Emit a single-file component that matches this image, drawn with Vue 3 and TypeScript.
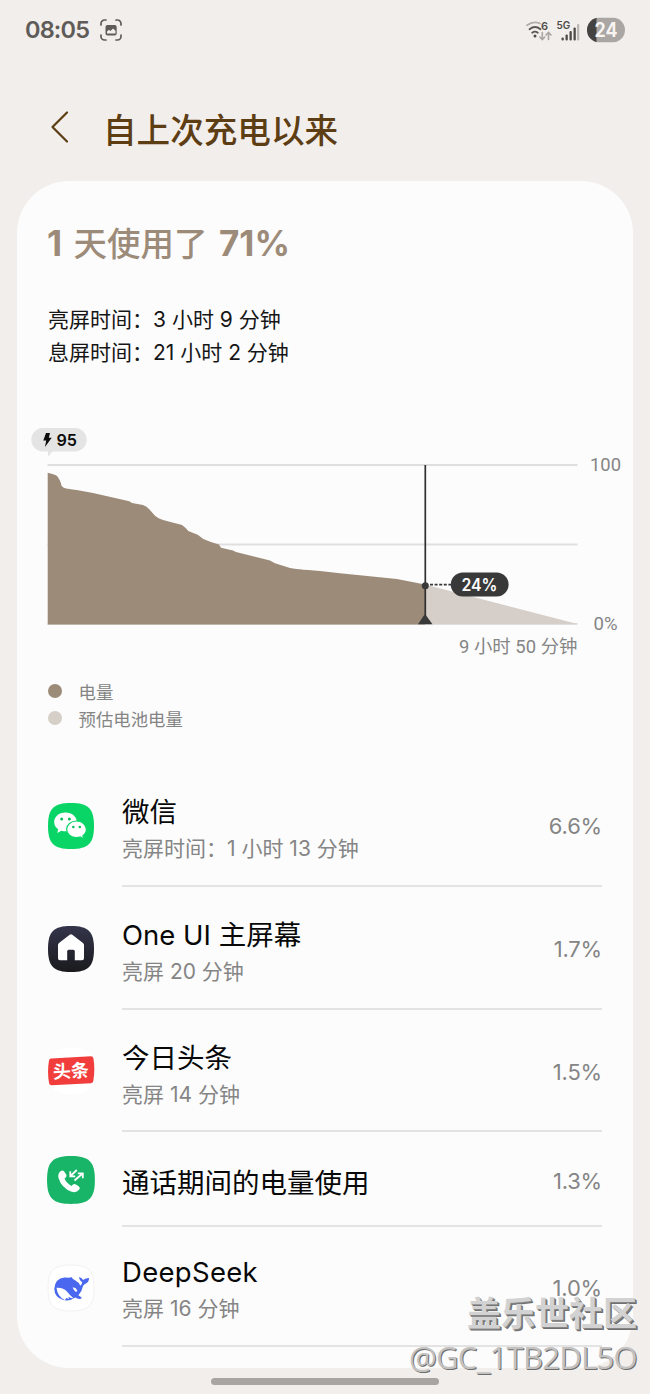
<script setup lang="ts">
type IconKind = 'wechat' | 'home' | 'toutiao' | 'call' | 'deepseek'

interface UsageRow {
  icon: IconKind
  name: string
  detail?: string
  percent: string
}

const rows: UsageRow[] = [
  { icon: 'wechat', name: '微信', detail: '亮屏时间：1 小时 13 分钟', percent: '6.6%' },
  { icon: 'home', name: 'One UI 主屏幕', detail: '亮屏 20 分钟', percent: '1.7%' },
  { icon: 'toutiao', name: '今日头条', detail: '亮屏 14 分钟', percent: '1.5%' },
  { icon: 'call', name: '通话期间的电量使用', percent: '1.3%' },
  { icon: 'deepseek', name: 'DeepSeek', detail: '亮屏 16 分钟', percent: '1.0%' },
]

const squircle = 'M24 1C41.5 1 47 6.5 47 24S41.5 47 24 47 1 41.5 1 24 6.500 1 24 1Z'
</script>

<template>
  <div class="screen">
    <header class="status">
      <span class="clock">08:05</span>
      <svg class="shot" width="22" height="22" viewBox="0 0 22 22">
        <path d="M1 6V4.500A3.500 3.500 0 0 1 4.500 1H6M16 1h1.500A3.500 3.500 0 0 1 21 4.500V6M21 16v1.500a3.500 3.500 0 0 1-3.500 3.500H16M6 21H4.500A3.500 3.500 0 0 1 1 17.500V16" fill="none" stroke="#5e5b59" stroke-width="1.7" stroke-linecap="round" />
        <rect x="5.500" y="6" width="11.200" height="10.500" rx="2" fill="#5e5b59" />
        <path d="M7 14.500v-2l2-1.800 1.500 1.200 2.500-2.400 2.500 2.300v2.700Z" fill="#f2eeeb" />
      </svg>
      <span class="spacer"></span>
      <svg width="104" height="28" viewBox="0 0 104 28">
        <g fill="none" stroke-linecap="round" stroke-width="1.800">
          <path d="M2 9.300Q8.500 4.500 15 7.500" stroke="#b0adab" />
          <path d="M4.500 13.300Q10 8.800 15.500 13.300" stroke="#5a5755" />
          <path d="M7.200 16.800Q10 14.500 12.800 16.800" stroke="#5a5755" />
          <path d="M17.300 16.500v7M14.800 21l2.500 2.500 2.500-2.500M23.500 23.500v-7M21 19l2.500-2.500L26 19" stroke="#aaa6a3" stroke-width="1.600" />
        </g>
        <circle cx="10" cy="20" r="1.500" fill="#4d4a48" />
        <text x="16" y="14" class="tiny">6</text>
        <text x="31.500" y="12.500" class="tiny five">5G</text>
        <g fill="#4d4a48">
          <rect x="36.500" y="21.500" width="2.300" height="3" rx="1" />
          <rect x="40.500" y="18.500" width="2.300" height="6" rx="1" />
          <rect x="44.500" y="15" width="2.300" height="9.500" rx="1" />
          <rect x="48.500" y="11.500" width="2.300" height="13" rx="1" />
          <rect x="52" y="8" width="2.300" height="16.500" rx="1" fill="#bbb7b4" />
        </g>
        <clipPath id="battery"><rect x="62" y="1.500" width="38" height="25" rx="12.500" /></clipPath>
        <g clip-path="url(#battery)">
          <rect x="62" y="1.500" width="39" height="25" fill="#aaa6a3" />
          <rect x="62" y="1.500" width="9.500" height="25" fill="#454341" />
        </g>
        <text x="81" y="20.700" class="level" text-anchor="middle" textLength="23" lengthAdjust="spacingAndGlyphs">24</text>
      </svg>
    </header>

    <div class="titlebar">
      <svg width="20" height="34" viewBox="0 0 20 34">
        <path d="M17 2.500 2.500 17 17 31.500" fill="none" stroke="#5d3d14" stroke-width="2.200" stroke-linecap="round" stroke-linejoin="round" />
      </svg>
      <h1>自上次充电以来</h1>
    </div>

    <main class="card">
      <h2><b>1</b> 天使用了 <b>71%</b></h2>
      <div class="times">
        <p>亮屏时间：3 小时 9 分钟</p>
        <p>息屏时间：21 小时 2 分钟</p>
      </div>

      <svg class="chart" width="616" height="244" viewBox="17 420 616 244">
        <g stroke="#dfdfdf" stroke-width="1.800">
          <path d="M47.500 465H577.500M47.500 544.500H577.500M47.500 624H577.500" />
        </g>
        <path fill="#d6cec8" d="M425 584.500 577.500 624H425Z" />
        <path fill="#9d8b79" d="M47.700 472.700Q53 474 56 475.300Q59 477.500 61 483.500Q61 487 66 488.500L78 490.300 93 493 129.300 501.300 132 503 143 505Q147 506.500 149 509L155 515.700Q158 518.500 163 520L182 525Q185 527 188.300 531L197.700 534.700 203.300 539 Q210 542 219 544.500L221 547.700 233 550.500 236 552 270 560.500 275 563.300 290 568Q294 569 320 571L340 573.300 397 579 425 584.500V624.500H47.700Z" />
        <path d="M425.300 465V622" stroke="#2f2f30" stroke-width="1.700" />
        <path d="M418 624.300 423.500 616Q425 613.500 426.500 616L432.500 624.300Z" fill="#39393a" />
        <circle cx="425.300" cy="585.800" r="3.500" fill="#39393a" />
        <path d="M430 584.700H451" stroke="#39393a" stroke-width="1.800" stroke-dasharray="3 1.600" />
        <rect x="450.800" y="572.500" width="57.800" height="24" rx="12" fill="#39393a" />
        <text x="461.500" y="591.300" class="bubble" textLength="36" lengthAdjust="spacingAndGlyphs">24%</text>
        <path d="M43 428H75a11.700 11.700 0 0 1 0 23.400H52.500L48 456.500V451.400H43A11.700 11.700 0 0 1 43 428Z" fill="#e4e4e5" />
        <path d="M46 433h4l-1.200 4.700h2.900l-6.700 9.200 1.200-6.500h-2.900Z" fill="#0c0c0c" />
        <text x="56.500" y="446" class="start" textLength="20.500" lengthAdjust="spacingAndGlyphs">95</text>
        <text x="590" y="471" class="axis" textLength="31" lengthAdjust="spacingAndGlyphs">100</text>
        <text x="593.500" y="629.500" class="axis" textLength="24" lengthAdjust="spacingAndGlyphs">0%</text>
        <text x="459" y="653" class="axis" textLength="118.500" lengthAdjust="spacingAndGlyphs">9 小时 50 分钟</text>
      </svg>

      <ul class="legend">
        <li><i class="dot used"></i>电量</li>
        <li><i class="dot estimate"></i>预估电池电量</li>
      </ul>

      <ul class="apps">
        <li v-for="row in rows" :key="row.icon" :class="['app', row.icon]">
          <svg class="icon" width="48" height="48" viewBox="0 0 48 48">
            <template v-if="row.icon === 'wechat'">
              <path :d="squircle" fill="#09d567" />
              <path d="M18.500 10.500c-6.500 0-11.300 4.200-11.300 9.500 0 3 1.500 5.600 4 7.300l-.9 3.600 4-2.200c1.300.4 2.700.6 4.200.6 6.500 0 11.300-4.200 11.300-9.400s-4.800-9.400-11.300-9.400Z" fill="#fff" />
              <path d="M29.500 19c5.600 0 9.900 3.700 9.900 8.300 0 2.700-1.400 5-3.500 6.500l.7 3-3.500-1.800c-1.100.3-2.300.5-3.600.5-5.600 0-9.900-3.600-9.900-8.200S23.900 19 29.500 19Z" fill="#fff" stroke="#09d567" stroke-width="1.200" />
              <g fill="#09bd5c"><circle cx="14.700" cy="17" r="1.500" /><circle cx="22.400" cy="17" r="1.500" /><circle cx="26.300" cy="25" r="1.250" /><circle cx="32.800" cy="25" r="1.250" /></g>
            </template>
            <template v-else-if="row.icon === 'home'">
              <linearGradient id="night" x2="0" y2="1"><stop stop-color="#34354b" /><stop offset="1" stop-color="#1a1a1e" /></linearGradient>
              <path :d="squircle" fill="url(#night)" />
              <path d="M22.700 9.800q1.300-1 2.600 0L36 18q1 .8 1 2v13.300q0 2-2 2h-7.200v-9q0-1.500-1.500-1.500h-4.600q-1.500 0-1.500 1.500v9H13q-2 0-2-2V20q0-1.200 1-2Z" fill="#fff" />
            </template>
            <template v-else-if="row.icon === 'toutiao'">
              <path :d="squircle" fill="#fff" />
              <path d="M4 11.500 44 9.200q2 0 2.400 2Q48.300 22 46.300 34q-.3 2-2.300 2.200L4.500 38.300q-2 0-2.400-2Q0 25 2 13.500q.3-2 2-2Z" fill="#f13e3c" />
              <text x="24" y="30.500" text-anchor="middle" transform="rotate(-3 24 24)" class="toutiao-mark">头条</text>
            </template>
            <template v-else-if="row.icon === 'call'">
              <path :d="squircle" fill="#18b568" transform="translate(-1 -1) scale(1.040)" />
              <path d="M13.500 15.300q2.300-1.600 3.700.3l2 3q1 1.700-.5 3l-1.200 1q1.800 4.400 6.800 7.300l1.800-1.500q1.300-1 2.800.1l3 2.100q1.700 1.400.4 3-2.800 3.500-7.700 2.200Q14.500 32 11.500 22q-.9-4.700 2-6.700Z" fill="#fff" />
              <path d="M29.800 14 23.500 20M23.300 15.300V20.300H28.300M27.500 24.500 35.500 17.500M30.800 17.300H35.800V22.300" fill="none" stroke="#fff" stroke-width="1.800" />
            </template>
            <template v-else>
              <path :d="squircle" fill="#fff" stroke="#ededf0" stroke-width=".8" />
              <path d="M22.500 13.800l1.800-.9q1.500 2.300 3.700 3.400 4 2 5.300 5.400 2-1.500 1.900-3.600-3-1.700-3.100-5.100 2.500.8 4 2.900 2.500-1.900 6-2-.1 4.600-4 6-1.800.7-2.200 2.400-.9 5.300-4.500 9l3.300 2.300q.2 1.400-2.200 1.300-2.400 0-4.200-1.300-5.700 3.900-12 2.400Q7.400 33.300 7.300 24.700 8 14.500 17.500 13.500q3 0 5 .3Z" fill="#4a68ef" />
              <path d="M9.500 23.800q6.400-.6 10.900 4.100 3 3.900 5.900 6.200-2.700.5-5-1.300.1 1 .9 2.200l-3-1-1.300 2.300Q10.500 32.800 9.500 23.800Z" fill="#fff" />
              <path d="M25.500 23.500q3.500-.4 4.800 3.300-.8 1.600-2.100.6-1.500-1.700-2.700-3.900Z" fill="#fff" />
            </template>
          </svg>
          <div class="body">
            <div class="labels">
              <div class="name">{{ row.name }}</div>
              <div v-if="row.detail" class="detail">{{ row.detail }}</div>
            </div>
            <span class="percent">{{ row.percent }}</span>
          </div>
        </li>
      </ul>
    </main>

    <div class="handle"></div>

    <div class="watermark">
      <div class="community">盖乐世社区</div>
      <div class="author">@GC_1TB2DL5O</div>
    </div>
  </div>
</template>

<style>
body {
  background: #f2eeeb;
}
</style>

<style scoped>
.screen {
  position: relative;
  width: 650px;
  height: 1394px;
  overflow: hidden;
  background: #f2eeeb;
  font-family: Inter, 'Noto Sans CJK SC', sans-serif;
  font-weight: 400;
  white-space: nowrap;
}
h1, h2, p, ul {
  margin: 0;
  padding: 0;
  list-style: none;
}
.status {
  display: flex;
  align-items: center;
  height: 60px;
  padding: 0 21px 0 25px;
}
.clock {
  width: 75px;
  margin-top: -1px;
  font-size: 23.500px;
  font-weight: 600;
  letter-spacing: -.85px;
  color: #5e5b59;
}
.shot {
  margin-left: -.5px;
}
.spacer {
  flex: 1;
}
.tiny {
  font-size: 11px;
  font-weight: 600;
  fill: #4d4a48;
}
.five {
  font-size: 10px;
}
.level {
  font-size: 19.500px;
  font-weight: 700;
  fill: #f7f4f2;
}
.titlebar {
  display: flex;
  align-items: center;
  gap: 33px;
  height: 121px;
  box-sizing: border-box;
  padding: 0 0 0 50px;
}
.titlebar svg {
  margin-top: 13px;
}
h1 {
  margin-top: 20px;
  font-size: 33.600px;
  line-height: 48px;
  font-weight: 500;
  color: #5d3d14;
}
.card {
  width: 616px;
  height: 1187px;
  margin-left: 17px;
  box-sizing: border-box;
  padding-top: 38px;
  border-radius: 52px;
  background: #fcfcfc;
}
h2 {
  padding-left: 30px;
  font-size: 33.500px;
  line-height: 48px;
  font-weight: 500;
  word-spacing: 2.500px;
  color: #9d8b79;
}
h2 b {
  font-size: 35px;
  font-weight: 700;
}
.times {
  height: 66px;
  padding: 35px 0 51px 31px;
  font-size: 21px;
  line-height: 33px;
  color: #161616;
}
.chart {
  display: block;
}
.axis {
  font-size: 18px;
  font-family: Roboto, 'Noto Sans CJK SC', sans-serif;
  fill: #858585;
}
.bubble {
  font-size: 17px;
  font-weight: 600;
  fill: #fff;
}
.start {
  font-size: 16.500px;
  font-weight: 600;
  fill: #0c0c0c;
}
.legend {
  padding: 14.500px 0 0 30.500px;
  height: 85.500px;
  font-size: 17.400px;
  line-height: 27px;
  color: #858585;
}
.legend li {
  display: flex;
  align-items: center;
}
.dot {
  width: 14px;
  height: 14px;
  margin: -2px 17px 0 0;
  border-radius: 50%;
}
.used {
  background: #9d8b79;
}
.estimate {
  background: #d5cfc7;
}
.app {
  display: flex;
  height: 123px;
  padding: 0 31px 0 30px;
}
.icon {
  flex: none;
  margin: 38px 27px 0 0;
}
.body {
  flex: 1;
  display: flex;
  justify-content: space-between;
  box-sizing: border-box;
  border-bottom: 2px solid #e3e3e3;
}
.labels {
  padding-top: 29px;
}
.name {
  font-size: 27.500px;
  line-height: 38px;
  color: #080808;
}
.detail {
  font-size: 21px;
  line-height: 36px;
  color: #858585;
}
.percent {
  margin-top: 46px;
  font-size: 22px;
  line-height: 32px;
  letter-spacing: -.2px;
  color: #858585;
}
.toutiao {
  height: 122px;
}
.toutiao .icon {
  margin-top: 37px;
}
.call {
  height: 95px;
}
.call .icon {
  margin-top: 24px;
}
.call .labels {
  padding-top: 32px;
}
.call .percent {
  margin-top: 33px;
}
.deepseek {
  height: 120px;
}
.deepseek .icon {
  margin-top: 37px;
}
.deepseek .labels {
  padding-top: 26px;
}
.deepseek .name {
  letter-spacing: .3px;
}
.deepseek .percent {
  margin-top: 45px;
}
.toutiao-mark {
  font-size: 18px;
  font-weight: 700;
  fill: #fff;
}
.handle {
  width: 228px;
  height: 7px;
  margin: 10px 0 0 211px;
  border-radius: 4px;
  background: #a8a4a1;
}
.watermark {
  position: absolute;
  right: 13px;
  top: 1289px;
  text-align: right;
}
.community {
  font-size: 34px;
  line-height: 50px;
  font-weight: 700;
  color: #d2d2d2;
  text-shadow: 1px 1px 0 #858585, 2px 2px 0 #707070;
}
.author {
  margin-top: -3px;
  font-family: 'Open Sans', sans-serif;
  font-size: 31px;
  letter-spacing: -.7px;
  line-height: 42px;
  color: #c4c2c1;
  text-shadow: 1px 1px 0 #6c6c6c;
}
</style>
